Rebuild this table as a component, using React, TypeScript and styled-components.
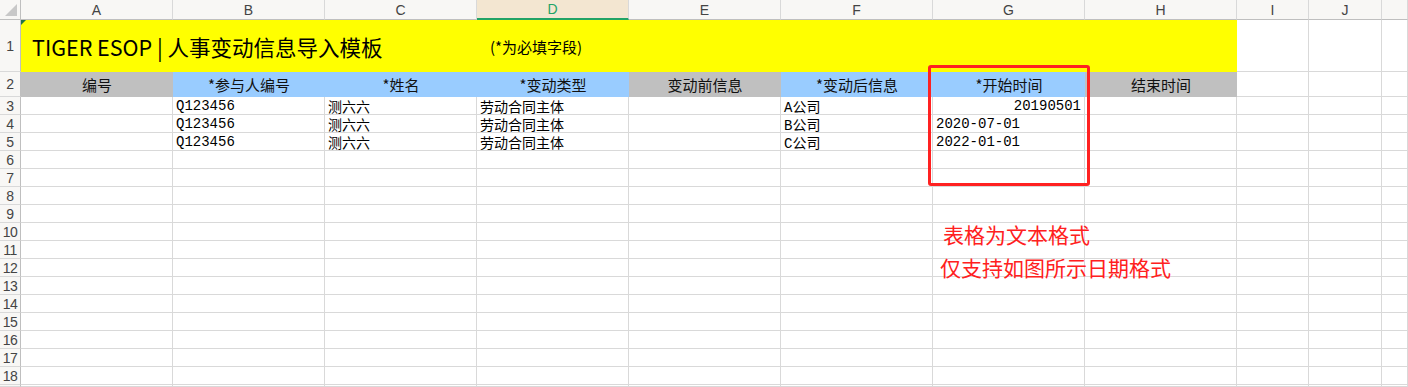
import React from 'react';
import styled, { createGlobalStyle } from 'styled-components';

const GlobalStyle = createGlobalStyle`
  html, body {
    margin: 0;
    padding: 0;
    background: #ffffff;
    overflow: hidden;
  }
`;

const GRID = '#d9d9d9';
const HEAD_LINE = '#bfbfbf';
const CJK = '"Noto Sans CJK SC", "Noto Sans", sans-serif';
const MONO = '"Liberation Mono", "Noto Sans CJK SC", monospace';

// Sheet layout
const Sheet = styled.div`
  position: relative;
  display: grid;
  grid-template-columns: 21px repeat(8, 152px) 72px 73px 1fr;
  grid-template-rows: 20px 52px 25px repeat(16, 18px) 1fr;
  width: 1408px;
  height: 387px;
  background: #fff;
`;

const Corner = styled.div`
  position: relative;
  background: #f8f7f5;
  border-right: 1px solid ${HEAD_LINE};
  border-bottom: 1px solid ${HEAD_LINE};
  box-sizing: border-box;

  &::after {
    content: '';
    position: absolute;
    right: 3px;
    bottom: 3px;
    border-left: 12px solid transparent;
    border-bottom: 12px solid #c8c8c8;
  }
`;

const ColHead = styled.div<{ active?: boolean }>`
  display: flex;
  align-items: center;
  justify-content: center;
  background: ${(p) => (p.active ? '#f3e6d1' : '#f8f7f5')};
  color: ${(p) => (p.active ? '#21a366' : '#444')};
  border-right: 1px solid ${GRID};
  border-bottom: ${(p) => (p.active ? '2px solid #21a366' : `1px solid ${HEAD_LINE}`)};
  box-sizing: border-box;
  font-family: 'Liberation Sans', Arial, sans-serif;
  font-size: 14px;
`;

const RowHead = styled.div`
  display: flex;
  align-items: center;
  justify-content: center;
  background: #f8f7f5;
  color: #444;
  border-right: 1px solid ${HEAD_LINE};
  border-bottom: 1px solid ${GRID};
  box-sizing: border-box;
  font-family: 'Liberation Sans', Arial, sans-serif;
  font-size: 14px;
  letter-spacing: -0.5px;
  overflow: hidden;
`;

const Cell = styled.div<{ align?: 'left' | 'right' }>`
  display: flex;
  align-items: center;
  justify-content: ${(p) => (p.align === 'right' ? 'flex-end' : 'flex-start')};
  padding: 0 3px;
  border-right: 1px solid ${GRID};
  border-bottom: 1px solid ${GRID};
  box-sizing: border-box;
  font-family: ${MONO};
  font-size: 14px;
  color: #000;
  white-space: nowrap;
  overflow: hidden;
`;

const TitleCell = styled.div`
  position: relative;
  grid-column: span 8;
  display: flex;
  align-items: center;
  padding-left: 11px;
  background: #ffff00;
  box-sizing: border-box;
  font-family: ${CJK};
  color: #000;

  &::before {
    content: '';
    position: absolute;
    left: 0;
    top: 0;
    border-top: 5px solid #217346;
    border-right: 5px solid transparent;
  }
`;

const Title = styled.span`
  font-size: 21.5px;
  width: 458px;
`;

const Note = styled.span`
  font-size: 15px;
`;

const HeaderCell = styled.div<{ tone: 'gray' | 'blue' }>`
  display: flex;
  align-items: center;
  justify-content: center;
  background: ${(p) => (p.tone === 'gray' ? '#c0c0c0' : '#99ccff')};
  font-family: ${CJK};
  font-size: 15px;
  color: #111;
`;

// Overlays
const Highlight = styled.div`
  position: absolute;
  left: 928px;
  top: 65px;
  width: 162px;
  height: 121px;
  border: 3px solid #ff2121;
  border-radius: 3px;
  box-sizing: border-box;
  pointer-events: none;
`;

const Remark = styled.div`
  position: absolute;
  left: 940px;
  top: 222px;
  display: flex;
  flex-direction: column;
  gap: 8px;
  font-family: ${CJK};
  font-size: 21px;
  line-height: 25px;
  color: #ff2020;
`;

const RemarkLine = styled.span<{ indent?: number }>`
  padding-left: ${(p) => p.indent || 0}px;
`;

const columns = ['A', 'B', 'C', 'D', 'E', 'F', 'G', 'H', 'I', 'J', ''];

const headers: { label: string; tone: 'gray' | 'blue' }[] = [
  { label: '编号', tone: 'gray' },
  { label: '*参与人编号', tone: 'blue' },
  { label: '*姓名', tone: 'blue' },
  { label: '*变动类型', tone: 'blue' },
  { label: '变动前信息', tone: 'gray' },
  { label: '*变动后信息', tone: 'blue' },
  { label: '*开始时间', tone: 'blue' },
  { label: '结束时间', tone: 'gray' },
];

type Row = (string | { text: string; right: true })[];

const data: Row[] = [
  ['', 'Q123456', '测六六', '劳动合同主体', '', 'A公司', { text: '20190501', right: true }, '', '', '', ''],
  ['', 'Q123456', '测六六', '劳动合同主体', '', 'B公司', '2020-07-01', '', '', '', ''],
  ['', 'Q123456', '测六六', '劳动合同主体', '', 'C公司', '2022-01-01', '', '', '', ''],
];

const emptyRow: Row = Array(11).fill('');

const App: React.FC = () => {
  const rows: Row[] = [...data];
  while (rows.length < 17) rows.push(emptyRow);

  return (
    <>
      <GlobalStyle />
      <Sheet>
        <Corner />
        {columns.map((c) => (
          <ColHead key={`col-${c}`} active={c === 'D'}>
            {c}
          </ColHead>
        ))}

        <RowHead>1</RowHead>
        <TitleCell>
          <Title>TIGER ESOP | 人事变动信息导入模板</Title>
          <Note>(*为必填字段)</Note>
        </TitleCell>
        <Cell />
        <Cell />
        <Cell />

        <RowHead>2</RowHead>
        {headers.map((h) => (
          <HeaderCell key={h.label} tone={h.tone}>
            {h.label}
          </HeaderCell>
        ))}
        <Cell />
        <Cell />
        <Cell />

        {rows.map((row, i) => (
          <React.Fragment key={`row-${i}`}>
            <RowHead>{i < 16 ? i + 3 : ''}</RowHead>
            {row.map((v, j) =>
              typeof v === 'string' ? (
                <Cell key={j}>{v}</Cell>
              ) : (
                <Cell key={j} align="right">
                  {v.text}
                </Cell>
              )
            )}
          </React.Fragment>
        ))}

        <Highlight />
        <Remark>
          <RemarkLine indent={3}>表格为文本格式</RemarkLine>
          <RemarkLine>仅支持如图所示日期格式</RemarkLine>
        </Remark>
      </Sheet>
    </>
  );
};

export default App;
